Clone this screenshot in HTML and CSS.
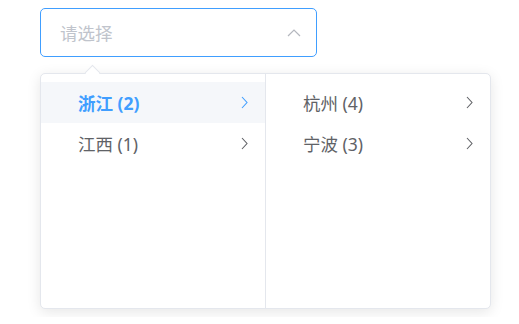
FILE: index.html
```html
<!DOCTYPE html>
<html lang="zh-CN">
<head>
    <meta charset="UTF-8">
    <title>Cascader</title>
    <link rel="stylesheet" href="styles.css">
</head>
<body>
    <div class="cascader">
        <div class="cascader-input">
            <span class="placeholder">请选择</span>
            <svg class="input-arrow" width="14" height="8" viewBox="0 0 14 8">
                <path d="M1 7 L7 1 L13 7" fill="none" stroke="#b4b7be" stroke-width="1.2"/>
            </svg>
        </div>
        <div class="cascader-dropdown">
            <span class="popper-arrow"></span>
            <div class="cascader-panel">
                <ul class="cascader-menu">
                    <li class="node active">
                        <span class="label">浙江 (2)</span>
                        <svg class="node-arrow" width="7" height="13" viewBox="0 0 7 13"><path d="M1 1 L6 6.5 L1 12" fill="none" stroke="currentColor" stroke-width="1.1"/></svg>
                    </li>
                    <li class="node">
                        <span class="label">江西 (1)</span>
                        <svg class="node-arrow" width="7" height="13" viewBox="0 0 7 13"><path d="M1 1 L6 6.5 L1 12" fill="none" stroke="currentColor" stroke-width="1.1"/></svg>
                    </li>
                </ul>
                <ul class="cascader-menu">
                    <li class="node">
                        <span class="label">杭州 (4)</span>
                        <svg class="node-arrow" width="7" height="13" viewBox="0 0 7 13"><path d="M1 1 L6 6.5 L1 12" fill="none" stroke="currentColor" stroke-width="1.1"/></svg>
                    </li>
                    <li class="node">
                        <span class="label">宁波 (3)</span>
                        <svg class="node-arrow" width="7" height="13" viewBox="0 0 7 13"><path d="M1 1 L6 6.5 L1 12" fill="none" stroke="currentColor" stroke-width="1.1"/></svg>
                    </li>
                </ul>
            </div>
        </div>
    </div>
</body>
</html>
```

FILE: styles.css
```css
body {
    margin: 0;
    padding: 8px 40px;
    background-color: #fff;
    font-family: "Noto Sans", "Noto Sans CJK SC", sans-serif;
}

.cascader {
    width: 451px;
}

.cascader-input {
    box-sizing: border-box;
    width: 277px;
    height: 49px;
    border: 1px solid #409eff;
    border-radius: 5px;
    display: flex;
    align-items: center;
    justify-content: space-between;
    padding: 0 15px 0 19px;
}

.placeholder {
    font-size: 17.5px;
    color: #c0c4cc;
}

.input-arrow {
    display: block;
}

.cascader-dropdown {
    position: relative;
    margin-top: 16px;
}

.popper-arrow {
    position: absolute;
    top: -6px;
    left: 47px;
    width: 10px;
    height: 10px;
    background-color: #fff;
    border-top: 1px solid #e4e7ed;
    border-left: 1px solid #e4e7ed;
    transform: rotate(45deg);
    z-index: 2;
}

.cascader-panel {
    box-sizing: border-box;
    display: flex;
    height: 236px;
    border: 1px solid #e4e7ed;
    border-radius: 5px;
    background-color: #fff;
    box-shadow: 0 3px 14px rgba(0, 0, 0, 0.1);
}

.cascader-menu {
    list-style: none;
    margin: 0;
    padding: 8px 0 0;
    width: 224px;
}

.cascader-menu + .cascader-menu {
    border-left: 1px solid #e4e7ed;
}

.node {
    height: 41px;
    display: flex;
    align-items: center;
    justify-content: space-between;
    padding: 0 17px 0 37px;
    font-size: 17.5px;
    color: #606266;
}

.node.active {
    background-color: #f5f7fa;
    color: #409eff;
    font-weight: bold;
}

.node-arrow {
    display: block;
}
```
